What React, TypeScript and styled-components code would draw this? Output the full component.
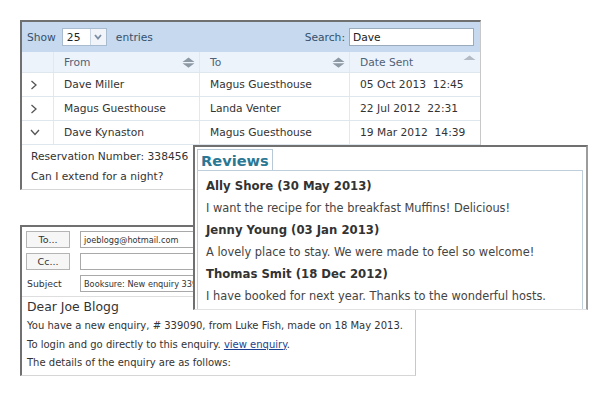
import React from "react";
import styled, { createGlobalStyle } from "styled-components";

const Global = createGlobalStyle`
  html, body { margin: 0; padding: 0; background: #fff; }
  body { font-family: "DejaVu Sans", Verdana, sans-serif; color: #333; }
`;

const Desktop = styled.div`
  position: relative;
  width: 600px;
  height: 400px;
  overflow: hidden;
  background: #fff;
`;

const Window = styled.section<{ $x: number; $y: number; $w: number; $h: number; $z?: number }>`
  position: absolute;
  left: ${(p) => p.$x}px;
  top: ${(p) => p.$y}px;
  width: ${(p) => p.$w}px;
  height: ${(p) => p.$h}px;
  z-index: ${(p) => p.$z ?? 1};
  box-sizing: border-box;
  background: #fff;
  border-top: 2px solid #707070;
  border-left: 2px solid #707070;
  border-right: 1px solid #c8c8c8;
  border-bottom: 1px solid #d6d6d6;
  overflow: hidden;
  display: flex;
  flex-direction: column;
`;

const ReviewWindow = styled(Window)`
  border-right: 2px solid #9c9c9c;
  border-bottom: 1px solid #e2e2e2;
  padding: 2px 3px 0 2px;
`;

/* ---------- table window ---------- */
const TopBar = styled.div`
  display: flex;
  align-items: center;
  justify-content: space-between;
  height: 30px;
  padding: 0 6px 0 5px;
  background: #c6d9ee;
  font-size: 10.7px;
  color: #34506c;
  flex-shrink: 0;
`;

const Group = styled.div<{ $gap: number }>`
  display: flex;
  align-items: center;
  gap: ${(p) => p.$gap}px;
`;

const SelectBox = styled.div`
  display: flex;
  height: 18px;
  box-sizing: border-box;
  border: 1px solid #a9bccf;
  background: #fff;
  margin-left: 1px;
`;

const SelectValue = styled.div`
  width: 27px;
  padding-left: 4px;
  box-sizing: border-box;
  display: flex;
  align-items: center;
  color: #222;
`;

const SelectArrow = styled.div`
  width: 15px;
  border-left: 1px solid #c9d5e1;
  background: #f1f4f8;
  display: flex;
  align-items: center;
  justify-content: center;
`;

const SearchInput = styled.input`
  width: 125px;
  height: 18px;
  box-sizing: border-box;
  border: 1px solid #9aabbb;
  background: #fff;
  padding: 0 3px;
  font: inherit;
  font-size: 10.7px;
  color: #222;
  outline: none;
`;

const Row = styled.div<{ $head?: boolean; $h: number }>`
  display: grid;
  grid-template-columns: 31px 146px 150px 1fr;
  height: ${(p) => p.$h}px;
  box-sizing: border-box;
  border-bottom: 1px solid #dfe6ee;
  background: ${(p) => (p.$head ? "#edf3fa" : "#fff")};
  color: ${(p) => (p.$head ? "#4f6278" : "#333")};
  font-size: 10.7px;
  flex-shrink: 0;
`;

const Cell = styled.div`
  display: flex;
  align-items: center;
  justify-content: space-between;
  padding: 0 4px 0 10px;
  border-left: 1px solid #e2e8ef;
  white-space: pre;
  &:first-child {
    border-left: none;
    padding-left: 8px;
  }
`;

const Details = styled.div`
  padding: 2px 9px;
  font-size: 10.7px;
  line-height: 20px;
  color: #333;
`;

/* ---------- reviews window ---------- */
const Tab = styled.div`
  align-self: flex-start;
  width: 76px;
  height: 21px;
  box-sizing: border-box;
  border: 1px solid #b7c9d7;
  border-bottom: none;
  display: flex;
  align-items: center;
  padding-left: 3px;
  font-size: 14.6px;
  font-weight: bold;
  color: #2b7895;
  flex-shrink: 0;
`;

const ReviewBox = styled.div`
  flex: 1;
  border: 1px solid #bfcedb;
  border-bottom: none;
  padding: 4px 8px;
`;

const ReviewName = styled.div`
  font-size: 11.7px;
  font-weight: bold;
  line-height: 22px;
  color: #333;
  white-space: nowrap;
`;

const ReviewText = styled.div`
  font-size: 11.4px;
  line-height: 22px;
  color: #444;
  white-space: nowrap;
`;

/* ---------- email window ---------- */
const Header = styled.div`
  display: grid;
  grid-template-columns: 44px 1fr;
  grid-auto-rows: 17px;
  column-gap: 10px;
  row-gap: 5px;
  padding: 4px 10px 4px 4px;
  flex-shrink: 0;
`;

const Btn = styled.div`
  box-sizing: border-box;
  border: 1px solid #b4b4b4;
  background: #f6f6f6;
  font-size: 9.5px;
  color: #333;
  display: flex;
  align-items: center;
  justify-content: center;
`;

const Label = styled.div`
  font-size: 9.3px;
  color: #333;
  display: flex;
  align-items: center;
  padding-left: 1px;
`;

const Field = styled.div`
  box-sizing: border-box;
  border: 1px solid #a9a9a9;
  background: #fff;
  font-size: 8.2px;
  color: #333;
  display: flex;
  align-items: center;
  padding-left: 3px;
  white-space: nowrap;
  overflow: hidden;
`;

const Body = styled.div`
  border-top: 1px solid #dedede;
  padding: 0 5px;
  color: #333;
  white-space: nowrap;
`;

const Greeting = styled.div`
  font-size: 12.4px;
  line-height: 20px;
`;

const Line = styled.div`
  font-size: 10px;
  line-height: 18.5px;
`;

const Link = styled.a`
  color: #1d3f8f;
  text-decoration: underline;
`;

/* ---------- icons ---------- */
const ChevronRight = () => (
  <svg width="8" height="10" viewBox="0 0 8 10">
    <path d="M1.5 1 L6 5 L1.5 9" stroke="#555" strokeWidth="1.3" fill="none" />
  </svg>
);

const ChevronDown = () => (
  <svg width="10" height="7" viewBox="0 0 10 7">
    <path d="M1 1 L5 5.5 L9 1" stroke="#555" strokeWidth="1.3" fill="none" />
  </svg>
);

const SmallArrow = () => (
  <svg width="8" height="6" viewBox="0 0 8 6">
    <path d="M1 1 L4 4.5 L7 1" stroke="#7b8fa5" strokeWidth="1.8" fill="none" />
  </svg>
);

const SortBoth = () => (
  <svg width="13" height="11" viewBox="0 0 13 11">
    <polygon points="0.5,5 6.5,0.5 12.5,5" fill="#8d9aa6" />
    <polygon points="0.5,6.3 6.5,10.8 12.5,6.3" fill="#8d9aa6" />
  </svg>
);

const SortUp = () => (
  <svg width="13" height="11" viewBox="0 0 13 11" style={{ marginTop: -4 }}>
    <polygon points="0.5,5 6.5,0.5 12.5,5" fill="#b3bcc5" />
  </svg>
);

const rows = [
  { from: "Dave Miller", to: "Magus Guesthouse", date: "05 Oct 2013  12:45", open: false },
  { from: "Magus Guesthouse", to: "Landa Venter", date: "22 Jul 2012  22:31", open: false },
  { from: "Dave Kynaston", to: "Magus Guesthouse", date: "19 Mar 2012  14:39", open: true },
];

const reviews = [
  { name: "Ally Shore (30 May 2013)", text: "I want the recipe for the breakfast Muffins! Delicious!" },
  { name: "Jenny Young (03 Jan 2013)", text: "A lovely place to stay. We were made to feel so welcome!" },
  { name: "Thomas Smit (18 Dec 2012)", text: "I have booked for next year. Thanks to the wonderful hosts." },
];

export default function App() {
  return (
    <>
      <Global />
      <Desktop>
        <Window $x={20} $y={20} $w={461} $h={170}>
          <TopBar>
            <Group $gap={5}>
              <span>Show</span>
              <SelectBox>
                <SelectValue>25</SelectValue>
                <SelectArrow>
                  <SmallArrow />
                </SelectArrow>
              </SelectBox>
              <span style={{ marginLeft: 4 }}>entries</span>
            </Group>
            <Group $gap={4}>
              <span>Search:</span>
              <SearchInput readOnly value="Dave" />
            </Group>
          </TopBar>
          <Row $head $h={21}>
            <Cell />
            <Cell>
              <span>From</span>
              <SortBoth />
            </Cell>
            <Cell>
              <span>To</span>
              <SortBoth />
            </Cell>
            <Cell>
              <span>Date Sent</span>
              <SortUp />
            </Cell>
          </Row>
          {rows.map((r) => (
            <Row key={r.date} $h={24}>
              <Cell>{r.open ? <ChevronDown /> : <ChevronRight />}</Cell>
              <Cell>{r.from}</Cell>
              <Cell>{r.to}</Cell>
              <Cell>{r.date}</Cell>
            </Row>
          ))}
          <Details>
            <div>Reservation Number: 338456</div>
            <div>Can I extend for a night?</div>
          </Details>
        </Window>

        <Window $x={20} $y={225} $w={396} $h={151}>
          <Header>
            <Btn>To...</Btn>
            <Field>joeblogg@hotmail.com</Field>
            <Btn>Cc...</Btn>
            <Field />
            <Label>Subject</Label>
            <Field>Booksure: New enquiry 339090</Field>
          </Header>
          <Body>
            <Greeting>Dear Joe Blogg</Greeting>
            <Line>You have a new enquiry, # 339090, from Luke Fish, made on 18 May 2013.</Line>
            <Line>
              To login and go directly to this enquiry. <Link>view enquiry</Link>.
            </Line>
            <Line>The details of the enquiry are as follows:</Line>
          </Body>
        </Window>

        <ReviewWindow $x={193} $y={145} $w={395} $h={165} $z={2}>
          <Tab>Reviews</Tab>
          <ReviewBox>
            {reviews.map((r) => (
              <React.Fragment key={r.name}>
                <ReviewName>{r.name}</ReviewName>
                <ReviewText>{r.text}</ReviewText>
              </React.Fragment>
            ))}
          </ReviewBox>
        </ReviewWindow>
      </Desktop>
    </>
  );
}
